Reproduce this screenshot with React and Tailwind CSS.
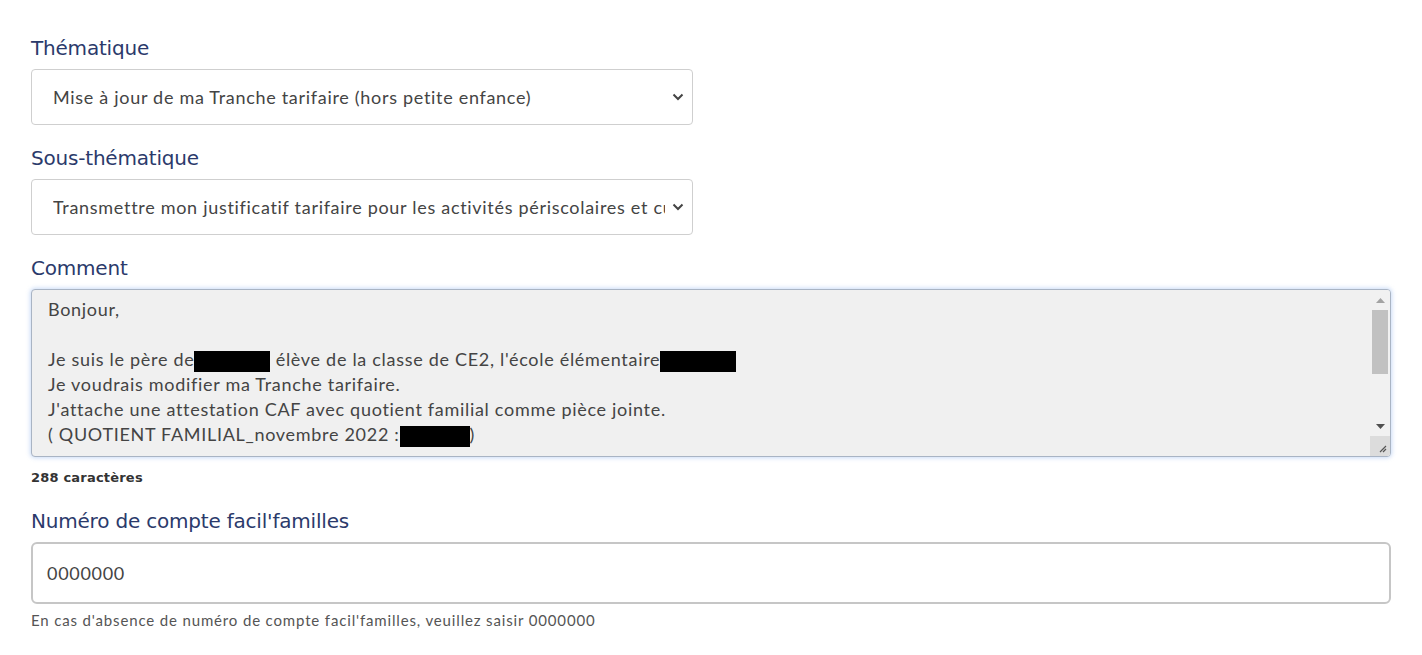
import React from 'react';

const label = "block text-[20px] leading-none text-[#2b3a6b] font-['DejaVu_Sans',sans-serif] tracking-[-0.2px]";
const body = "text-[18px] tracking-[0.7px] text-[#444] font-['Lato',sans-serif]";

const Chevron = () => (
  <svg width="12" height="8" viewBox="0 0 12 8" className="shrink-0">
    <path d="M1.5 1.5 L6 6 L10.5 1.5" fill="none" stroke="#444" strokeWidth="2" />
  </svg>
);

const Select = ({ value }) => (
  <div className="flex items-center w-[662px] h-[56px] pl-[21px] pr-[7px] bg-white border border-[#cfcfcf] rounded-[4px]">
    <span className={`flex-1 overflow-hidden whitespace-nowrap ${body}`}>{value}</span>
    <span className="w-[14px] flex justify-center ml-[6px]"><Chevron /></span>
  </div>
);

const Redact = ({ w }) => <span className={`inline-block align-middle bg-black h-[21px] ${w}`} />;

const Scrollbar = () => (
  <div className="absolute top-0 right-0 bottom-0 w-[20px] flex flex-col bg-[#f1f1f1]">
    <div className="h-[20px] flex items-center justify-center">
      <svg width="9" height="5" viewBox="0 0 9 5"><path d="M0 5 L4.5 0 L9 5Z" fill="#a3a3a3" /></svg>
    </div>
    <div className="h-[64px] mx-[2px] bg-[#c1c1c1]" />
    <div className="flex-1" />
    <div className="h-[20px] flex items-center justify-center">
      <svg width="9" height="5" viewBox="0 0 9 5"><path d="M0 0 L4.5 5 L9 0Z" fill="#505050" /></svg>
    </div>
    <div className="h-[20px] bg-[#dcdcdc] flex items-end justify-end p-[3px]">
      <svg width="10" height="10" viewBox="0 0 10 10"><path d="M9 3 L3 9 M9 6 L6 9" stroke="#555" strokeWidth="1.2" /></svg>
    </div>
  </div>
);

export default function App() {
  return (
    <div className="min-h-screen bg-white pl-[31px] pr-[31px] pt-[38px] text-[#444]">
      <label className={label}>Thématique</label>
      <div className="mt-[11px]">
        <Select value="Mise à jour de ma Tranche tarifaire (hors petite enfance)" />
      </div>

      <label className={`${label} mt-[23px]`}>Sous-thématique</label>
      <div className="mt-[11px]">
        <Select value="Transmettre mon justificatif tarifaire pour les activités périscolaires et culturelles" />
      </div>

      <label className={`${label} mt-[23px]`}>Comment</label>
      <div className="mt-[11px] relative w-[1360px] h-[168px] bg-[#f0f0f0] border border-[#a9b4c4] rounded-[4px] shadow-[0_0_4px_1px_rgba(102,153,230,0.35)] overflow-hidden">
        <div className={`pl-[16px] pt-[7px] leading-[25px] ${body}`}>
          <div>Bonjour,</div>
          <div>&nbsp;</div>
          <div>Je suis le père de<Redact w="w-[76px]" /> élève de la classe de CE2, l'école élémentaire<Redact w="w-[76px]" /></div>
          <div>Je voudrais modifier ma Tranche tarifaire.</div>
          <div>J'attache une attestation CAF avec quotient familial comme pièce jointe.</div>
          <div>( QUOTIENT FAMILIAL_novembre 2022 :<Redact w="w-[70px]" />)</div>
        </div>
        <Scrollbar />
      </div>
      <div className="mt-[14px] text-[13px] tracking-[0.2px] leading-none font-bold text-[#333] font-['DejaVu_Sans',sans-serif]">288 caractères</div>

      <label className={`${label} mt-[27px]`}>Numéro de compte facil'familles</label>
      <div className={`mt-[11px] w-[1360px] h-[62px] flex items-center pl-[14px] border-2 border-[#c6c6c6] rounded-[6px] bg-white ${body}`}>
        0000000
      </div>
      <div className="mt-[9px] text-[15px] leading-none tracking-[0.85px] text-[#555] font-['Lato',sans-serif]">
        En cas d'absence de numéro de compte facil'familles, veuillez saisir 0000000
      </div>
    </div>
  );
}
